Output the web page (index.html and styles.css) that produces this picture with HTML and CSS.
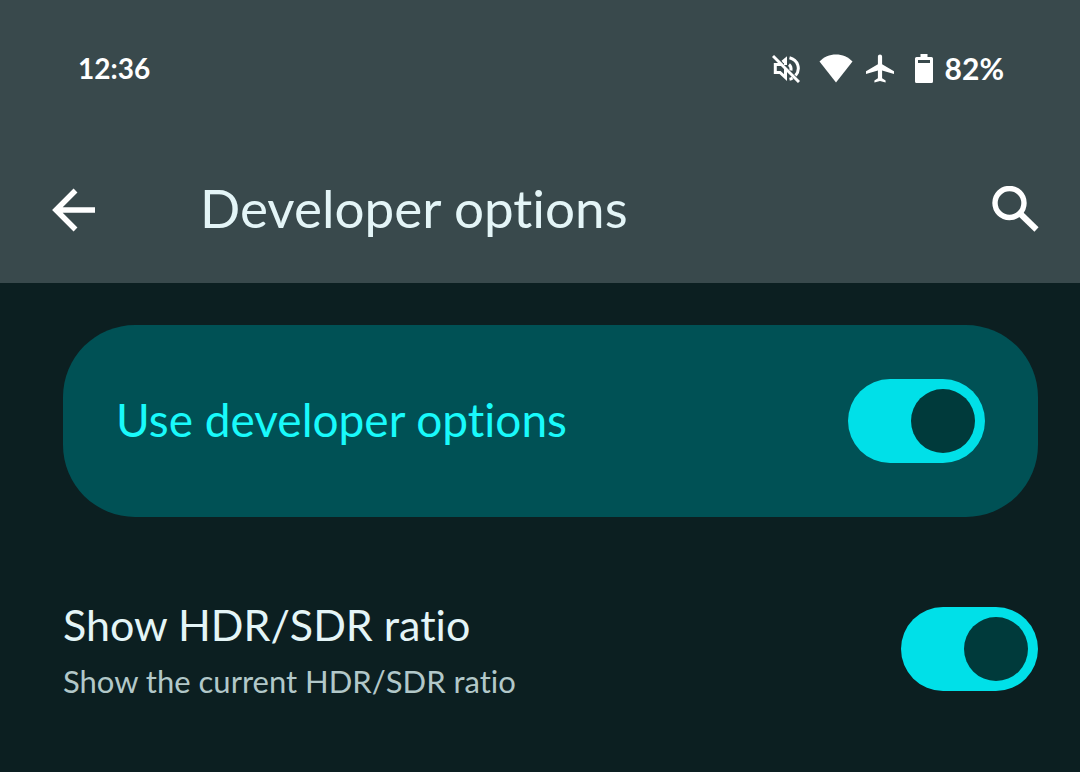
FILE: index.html
```html
<!DOCTYPE html>
<html lang="en">

<head>
  <meta charset="UTF-8">
  <meta name="viewport" content="width=device-width, initial-scale=1.0">
  <title>Developer options</title>
  <link rel="stylesheet" href="styles.css">
</head>

<body>
  <header class="header">
    <div class="status-bar">
      <time class="clock">12:36</time>
      <div class="status-icons">
        <svg class="status-icon" viewBox="0 0 28 29" aria-label="Muted">
          <g fill="none" stroke="currentColor" stroke-width="3">
            <path d="M9 10.500H3.300V18.500H8L13.500 23.500V15M10.500 8L13.500 5.500V11" />
            <path d="M17 10.500Q19.500 12.500 19 16.500" />
            <path d="M17.500 3.800C26 6 29 15 23.500 21.500M20.500 24Q19 25 17.500 25.300" />
            <path d="M1 2L27 28" />
          </g>
        </svg>
        <svg class="status-icon wifi" viewBox="0 0 34 29" aria-label="Wi-Fi">
          <path fill="currentColor" d="M17 0.500C10.500 0.500 4.800 3 0.500 7.500L17 28.500L33.500 7.500C29.200 3 23.500 0.500 17 0.500z" />
        </svg>
        <svg class="status-icon" viewBox="2 2 20 20" aria-label="Airplane mode">
          <path fill="currentColor" d="M22 16v-2l-8.500-5V3.500c0-.83-.67-1.500-1.500-1.500s-1.500.67-1.500 1.500V9L2 14v2l8.500-2.500V19L8 20.500V22l4-1 4 1v-1.500L13.500 19v-5.500L22 16z" />
        </svg>
        <svg class="status-icon battery" viewBox="0 0 18 29" aria-label="Battery">
          <path fill="currentColor" fill-rule="evenodd" d="M5.500 0H12.500V3H16.500Q18 3 18 4.500V27.500Q18 29 16.500 29H1.500Q0 29 0 27.500V4.500Q0 3 1.500 3H5.500zM3 6V9H15V6z" />
        </svg>
        <span class="battery-level">82%</span>
      </div>
    </div>

    <div class="toolbar">
      <button class="icon-button" type="button" aria-label="Back">
        <svg class="icon" viewBox="0 0 48 48">
          <path fill="none" stroke="currentColor" stroke-width="5.500" d="M45 24H7M25.500 4.500L6 24L25.500 43.500" />
        </svg>
      </button>
      <h1 class="title">Developer options</h1>
      <button class="icon-button" type="button" aria-label="Search">
        <svg class="icon" viewBox="0 0 48 48">
          <circle cx="18.500" cy="17" r="14.500" fill="none" stroke="currentColor" stroke-width="5.400" />
          <path fill="none" stroke="currentColor" stroke-width="6" d="M28 26.500L45.500 43.500" />
        </svg>
      </button>
    </div>
  </header>

  <main class="settings">
    <div class="main-switch">
      <label class="main-switch-label" for="use-dev">Use developer options</label>
      <input class="switch" type="checkbox" role="switch" id="use-dev" checked>
    </div>

    <div class="preference">
      <div class="preference-text">
        <label class="preference-title" for="hdr-ratio">Show HDR/SDR ratio</label>
        <span class="preference-summary">Show the current HDR/SDR ratio</span>
      </div>
      <input class="switch" type="checkbox" role="switch" id="hdr-ratio" checked>
    </div>
  </main>
</body>

</html>
```
FILE: styles.css
```css
* {
  box-sizing: border-box;
}

body {
  margin: 0;
  background-color: #0c1f21;
  color: #e4f5f7;
  font-family: Lato, "Open Sans", sans-serif;
  font-variant-ligatures: none;
}

.header {
  background-color: #39494c;
  padding: 48px 33px 36px 42px;
}

.status-bar {
  display: flex;
  align-items: center;
  justify-content: space-between;
  height: 40px;
  padding: 0 43px 0 36px;
  color: #fff;
  font-size: 30px;
  font-weight: bold;
}

.clock {
  font-size: 28px;
}

.status-icons {
  display: flex;
  align-items: center;
}

.status-icon {
  width: 28px;
  height: 29px;
  margin-right: 19px;
}

.status-icon.wifi {
  width: 34px;
  margin-right: 13px;
}

.status-icon.battery {
  width: 18px;
  margin: 0 12px 0 2px;
}

.toolbar {
  display: flex;
  align-items: center;
  margin-top: 84px;
  height: 75px;
}

.icon-button {
  display: flex;
  padding: 8px;
  border: 0;
  background: none;
  color: #fff;
  cursor: pointer;
}

.icon {
  width: 48px;
  height: 48px;
}

.title {
  flex: 1;
  margin: 0;
  padding: 0 0 4px 94px;
  font-size: 53px;
  font-weight: normal;
  line-height: 64px;
}

.settings {
  padding: 42px 42px 41px 63px;
}

.main-switch {
  display: flex;
  align-items: center;
  justify-content: space-between;
  height: 192px;
  padding: 0 53px;
  border-radius: 72px;
  background-color: #005155;
}

.main-switch-label {
  color: #19fafb;
  font-size: 46px;
  line-height: 56px;
  padding-bottom: 2px;
}

.switch {
  appearance: none;
  flex: none;
  display: flex;
  justify-content: flex-end;
  width: 137px;
  height: 84px;
  margin: 0;
  padding: 10px;
  border-radius: 42px;
  background-color: #00e0e8;
  cursor: pointer;
}

.switch::before {
  content: "";
  width: 64px;
  height: 64px;
  border-radius: 50%;
  background-color: #003a3b;
}

.switch:not(:checked) {
  justify-content: flex-start;
}

.preference {
  display: flex;
  align-items: center;
  justify-content: space-between;
  margin-top: 74px;
}

.preference-text {
  display: flex;
  flex-direction: column;
  padding-top: 4px;
}

.preference-title {
  font-size: 43px;
  line-height: 60px;
}

.preference-summary {
  color: #b2c8c9;
  font-size: 31px;
  line-height: 52px;
}
```
